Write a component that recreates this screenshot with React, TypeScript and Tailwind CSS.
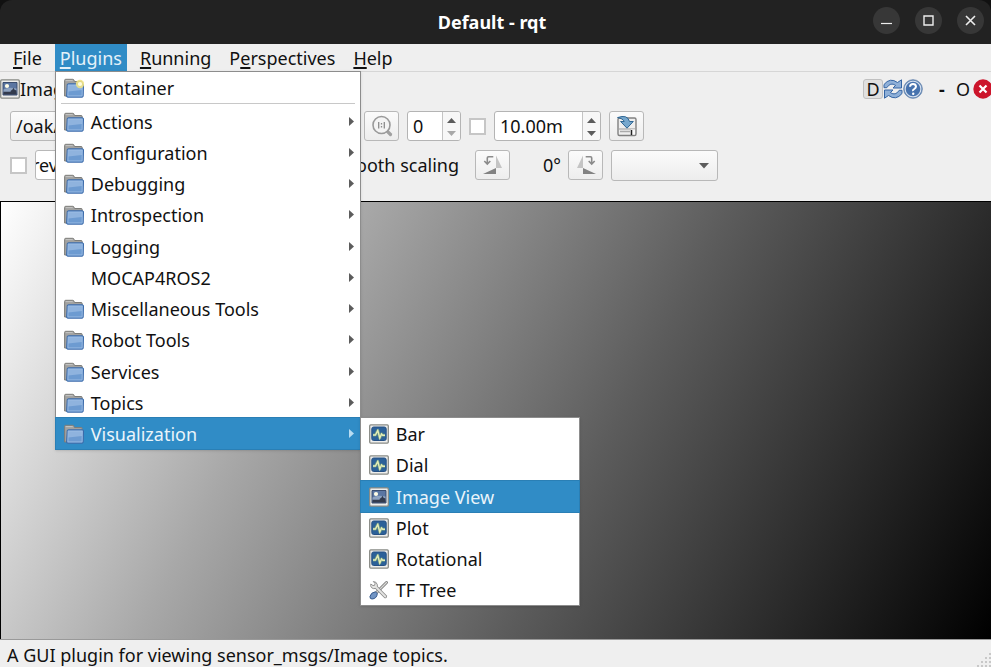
import React from "react";

const FONT = "font-['Noto_Sans','Open_Sans',sans-serif]";

function FolderIcon({ star = false }: { star?: boolean }) {
  return (
    <svg width="20" height="20" viewBox="0 0 20 20" className="shrink-0" aria-hidden="true">
      <path d="M.6 18V2.400Q.6 1.300 1.700 1.300h7.100q.9 0 1.200.9l.5 1.300h6.700q1 0 1 1.100v13.400z" fill="#a2a2a0" stroke="#7d7d7a" />
      <path d="M1.700 2.600h7" stroke="#c6c6c4" />
      <path d="M3.200 6.900q0-1.100 1.100-1.100h14.100q1.100 0 1.100 1.100l-.3 11.200q0 1.100-1.100 1.100H3.600q-1.100 0-1-1.100z" fill="#6d9bd1" stroke="#3a69a8" />
      <path d="M4.300 7h13.900l-.2 5-13.900 1.500z" fill="#8fb3de" />
      <path d="M4.200 7h14.100l-.2 10.900H3.900z" fill="none" stroke="#a3c2e6" strokeWidth=".7" />
      {star && (
        <g>
          <circle cx="16" cy="6" r="4.200" fill="#eee285" opacity=".9" />
          <circle cx="16" cy="6" r="2.100" fill="#fffde0" />
        </g>
      )}
    </svg>
  );
}

function ImageIcon() {
  return (
    <svg width="20" height="20" viewBox="0 0 20 20" className="shrink-0" aria-hidden="true">
      <rect x=".7" y=".9" width="18.600" height="18.200" rx="1" fill="#eeeeec" stroke="#888a85" strokeWidth="1.300" />
      <path d="M3 3.500h14v12.500H3z" fill="#5b76a2" stroke="#3a4d6e" />
      <path d="M3.500 10.500q5-3 13-1v4h-13z" fill="#8ea3c1" />
      <circle cx="7" cy="7" r="2.100" fill="#fffde6" />
      <path d="M3.500 12.800h7l.5-1.500h1l1.500-2.500 1 2 2 .6v4.100h-13z" fill="#333b4d" />
    </svg>
  );
}

function ChartIcon() {
  return (
    <svg width="20" height="20" viewBox="0 0 20 20" className="shrink-0" aria-hidden="true">
      <rect x=".7" y=".9" width="18.600" height="18.200" rx="1" fill="#eeeeec" stroke="#888a85" strokeWidth="1.300" />
      <rect x="2.800" y="3" width="14.400" height="13.500" rx="1.800" fill="#2c6199" stroke="#255084" />
      <path d="M4 11h2.400L8.800 6.500l2 7.500 1.700-4 1.200 1.200H16" fill="none" stroke="#7fa77b" strokeWidth="3" strokeLinejoin="round" opacity=".7" />
      <path d="M4 11h2.400L8.800 6.500l2 7.500 1.700-4 1.200 1.200H16" fill="none" stroke="#e6efb8" strokeWidth="1.400" />
    </svg>
  );
}

function ToolsIcon() {
  return (
    <svg width="20" height="20" viewBox="0 0 20 20" className="shrink-0" aria-hidden="true">
      <path d="M17.500 2.500 7 13" stroke="#777" strokeWidth="3" strokeLinecap="round" />
      <path d="M17.500 2.500 7 13" stroke="#d8d8d5" strokeWidth="1.400" strokeLinecap="round" />
      <path d="m6.500 6.500 9.800 10" stroke="#888" strokeWidth="3.400" strokeLinecap="round" />
      <path d="M4.300 1.500 6 3.400 5.700 5.200 4 5.600 1.800 4Q1 7.500 4.300 8.600Q8.500 9 8.400 4.800Q7.500 1.500 4.300 1.500Z" fill="#e4e4e2" stroke="#888" strokeWidth=".9" />
      <path d="m6.500 6.500 9.800 10" stroke="#e4e4e2" strokeWidth="1.800" strokeLinecap="round" />
      <path d="M6.500 11.800 8.300 13.600Q7.800 18.700 3 19Q.6 19 1 16.300Q2 12.300 6.500 11.800Z" fill="#7295c4" stroke="#35598c" />
    </svg>
  );
}

function ZoomIcon() {
  return (
    <svg width="22" height="22" viewBox="0 0 22 22" aria-hidden="true">
      <path d="m16.500 16.500 3 3" stroke="#a0a0a0" strokeWidth="3.200" strokeLinecap="round" />
      <circle cx="10.500" cy="10" r="8.500" fill="#f4f4f4" stroke="#9a9a9a" strokeWidth="1.600" />
      <path d="M7.700 7v6.500M13.300 7v6.500M10.500 8v1.400M10.500 11v1.400" stroke="#8c8c8c" strokeWidth="1.300" />
    </svg>
  );
}

function SaveIcon() {
  return (
    <svg width="22" height="22" viewBox="0 0 22 22" aria-hidden="true">
      <rect x="2" y="3" width="18" height="17.500" rx="1.500" fill="#eee" stroke="#808080" strokeWidth="1.400" />
      <path d="M3 14h16" stroke="#999" />
      <path d="M4 16.500h10" stroke="#aaa" strokeWidth="1.500" />
      <path d="M15 14.500h4v5h-4z" fill="#fafafa" />
      <path d="M15.500 15v5" stroke="#222" strokeWidth="1.500" />
      <path d="M1.500 2.600Q11.500-1 13.500 6.500h3.800L11 13.200 4.600 6.500h3.600Q7 3.500 1.500 2.600Z" fill="#76a7cd" stroke="#2e6694" />
    </svg>
  );
}

function RotateIcon({ right = false }: { right?: boolean }) {
  return (
    <svg width="22" height="22" viewBox="0 0 22 22" className={right ? "-scale-x-100" : ""} aria-hidden="true">
      <path d="M14 1.500V14h6z" fill="#c4c4c4" />
      <path d="M1 20h13v-6z" fill="#828282" />
      <path d="M11.300 2.800H6.500Q5.300 2.800 5.300 4v5.500M2.300 7l3 3 3-3" fill="none" stroke="#8b8b8b" strokeWidth="1.600" />
    </svg>
  );
}

function RefreshIcon() {
  return (
    <svg width="20" height="20" viewBox="0 0 20 20" aria-hidden="true">
      <path d="M1 8.700V5.500Q7-2 14.500 3.500L18.500.8V9H10l2.600-2.600Q7.500 2.800 3.800 8.700Z" fill="#8fb0d8" stroke="#3465a4" />
      <path d="M19 11.300v3.200q-6 7.500-13.500 2L1.500 19.200V11H10l-2.600 2.600q5.100 3.600 8.800-2.300z" fill="#8fb0d8" stroke="#3465a4" />
    </svg>
  );
}

function HelpIcon() {
  return (
    <svg width="20" height="20" viewBox="0 0 20 20" aria-hidden="true">
      <circle cx="10" cy="10" r="9.300" fill="#3465a4" stroke="#7792b5" />
      <circle cx="10" cy="10" r="7.900" fill="#4773ae" stroke="#d4dfed" strokeWidth="1.300" />
      <path d="M7 7.800Q7.200 5.100 10 5.100T13 7.600Q13 9 11.300 10T10.200 12" fill="none" stroke="#fff" strokeWidth="2" />
      <circle cx="10.200" cy="14.700" r="1.200" fill="#fff" />
    </svg>
  );
}

function CloseIcon() {
  return (
    <svg width="20" height="20" viewBox="0 0 20 20" aria-hidden="true">
      <circle cx="10" cy="10" r="9.700" fill="#cc152b" />
      <path d="m6.500 6.500 7 7m0-7-7 7" stroke="#fff" strokeWidth="2.200" />
    </svg>
  );
}

const MENUS: { pre: string; key: string; post: string; open?: boolean }[] = [
  { pre: "", key: "F", post: "ile" },
  { pre: "", key: "P", post: "lugins", open: true },
  { pre: "", key: "R", post: "unning" },
  { pre: "P", key: "e", post: "rspectives" },
  { pre: "", key: "H", post: "elp" },
];

const GROUPS = [
  "Actions",
  "Configuration",
  "Debugging",
  "Introspection",
  "Logging",
  "MOCAP4ROS2",
  "Miscellaneous Tools",
  "Robot Tools",
  "Services",
  "Topics",
  "Visualization",
];

const VIEWS = ["Bar", "Dial", "Image View", "Plot", "Rotational", "TF Tree"];

function viewIcon(name: string) {
  if (name === "Image View") return <ImageIcon />;
  if (name === "TF Tree") return <ToolsIcon />;
  return <ChartIcon />;
}

function PluginsMenu() {
  return (
    <div role="menu" aria-label="Plugins" className="absolute left-0 top-full z-10 w-[306px] border border-[#8d8d8d] bg-white text-[#111] shadow-sm">
      <button role="menuitem" className="flex h-[31px] w-full items-center gap-[7px] pl-2 text-left">
        <FolderIcon star />
        Container
      </button>
      <div className="mx-[5px] mb-[2px] h-px bg-[#c8c8c8]" />
      {GROUPS.map((name, i) => {
        const active = name === "Visualization";
        return (
          <div key={name} className={i % 4 === 3 ? "relative pb-px" : "relative"}>
            <button
              role="menuitem"
              aria-haspopup="true"
              className={`flex h-[31px] w-full items-center gap-[7px] pl-2 pr-[6px] text-left ${active ? "bg-[#308cc6] text-[#eaf4fa] outline outline-[#2a7fb5]" : ""}`}
            >
              {name === "MOCAP4ROS2" ? <span className="w-5" /> : <FolderIcon />}
              <span className="grow">{name}</span>
              <svg width="5" height="9" viewBox="0 0 5 9" aria-hidden="true">
                <path d="M0 0 5 4.500 0 9z" fill={active ? "#b8dcf2" : "#5c5c5c"} />
              </svg>
            </button>
            {active && (
              <div role="menu" aria-label="Visualization" className="absolute left-full top-[-1px] w-[220px] border border-[#8d8d8d] bg-white text-[#111] shadow-sm">
                {VIEWS.map((view, n) => (
                  <div key={view} className={n === 1 ? "pb-px" : ""}>
                    <button
                      role="menuitem"
                      className={`flex h-[31px] w-full items-center gap-[7px] pl-2 text-left ${view === "Image View" ? "bg-[#308cc6] text-[#eaf4fa] outline outline-[#2a7fb5]" : ""}`}
                    >
                      {viewIcon(view)}
                      {view}
                    </button>
                  </div>
                ))}
              </div>
            )}
          </div>
        );
      })}
    </div>
  );
}

function Spin({ value, label, width, dim = false }: { value: string; label: string; width: string; dim?: boolean }) {
  return (
    <div className={`flex h-[30px] overflow-hidden rounded-[3px] border border-[#b4b4b4] bg-white ${width}`}>
      <input aria-label={label} defaultValue={value} className="w-0 grow px-[5px] outline-none" />
      <div className="flex w-[18px] shrink-0 flex-col border-l border-[#c4c4c4] bg-[#f7f7f7]">
        <button aria-label={`Increase ${label}`} className="flex h-[14px] items-center justify-center pt-[2px]">
          <svg width="9" height="5" viewBox="0 0 9 5"><path d="m0 5 4.500-5L9 5z" fill="#5c5c5c" /></svg>
        </button>
        <button aria-label={`Decrease ${label}`} className="flex h-[14px] items-center justify-center">
          <svg width="9" height="5" viewBox="0 0 9 5"><path d="m0 0 4.500 5L9 0z" fill={dim ? "#a8a8a8" : "#5c5c5c"} /></svg>
        </button>
      </div>
    </div>
  );
}

const TOOL = "flex h-[30px] w-[35px] shrink-0 items-center justify-center rounded-[3px] border border-[#b8b8b8] bg-linear-to-b from-[#fbfbfb] to-[#ededed]";
const CHECK = "size-[17px] shrink-0 appearance-none border-2 border-[#c6c6c6] bg-white";
const WINDOW_BUTTON = "flex size-[27px] items-center justify-center rounded-full bg-[#373737]";

export default function App() {
  return (
    <div className={`flex h-screen flex-col overflow-hidden bg-[#efefef] text-lg leading-6 text-[#111] ${FONT}`}>
      <div className="bg-[#111]">
        <header className="grid h-11 grid-cols-[1fr_auto_1fr] items-center rounded-t-xl bg-[#222] pr-[7px] text-white">
          <span />
          <h1 className="font-bold">Default - rqt</h1>
          <div className="flex justify-end gap-[15px] pb-[3px]">
            <button aria-label="Minimize" className={WINDOW_BUTTON}>
              <svg width="11" height="11" viewBox="0 0 11 11"><path d="M0 8.500h11" stroke="#eee" strokeWidth="1.200" /></svg>
            </button>
            <button aria-label="Maximize" className={WINDOW_BUTTON}>
              <svg width="11" height="11" viewBox="0 0 11 11"><path d="M1 1h9v9H1z" fill="none" stroke="#eee" strokeWidth="1.400" /></svg>
            </button>
            <button aria-label="Close" className={WINDOW_BUTTON}>
              <svg width="11" height="11" viewBox="0 0 11 11"><path d="m1 1 9 9m0-9-9 9" stroke="#eee" strokeWidth="1.600" /></svg>
            </button>
          </div>
        </header>
      </div>

      <nav className="flex h-7 shrink-0 gap-2 border-b border-[#d6d6d6] pl-2">
        {MENUS.map((m) => (
          <div key={m.post} className="relative">
            <button className={`h-7 px-[5px] ${m.open ? "bg-[#308cc6] text-[#e4f1f9]" : ""}`}>
              {m.pre}
              <span className="underline decoration-2 underline-offset-2">{m.key}</span>
              {m.post}
            </button>
            {m.open && <PluginsMenu />}
          </div>
        ))}
      </nav>

      <div className="flex h-[34px] shrink-0 items-center justify-between overflow-hidden">
        <div className="flex items-center">
          <ImageIcon />
          <span>Imag</span>
        </div>
        <div className="flex items-center">
          <button className="h-5 w-5 rounded-[3px] border border-[#c0c0c0] bg-[#e0e0e0] leading-[18px]">D</button>
          <button aria-label="Reload"><RefreshIcon /></button>
          <button aria-label="Help"><HelpIcon /></button>
          <button aria-label="Undock" className="ml-3 w-[14px] font-bold">-</button>
          <button aria-label="Float" className="ml-1 w-5">O</button>
          <button aria-label="Close plugin" className="-mr-[2px]"><CloseIcon /></button>
        </div>
      </div>

      <div className="flex h-10 shrink-0 items-center pl-[10px]">
        <select aria-label="Topic" className="h-[30px] w-[344px] appearance-none rounded-[3px] border border-[#b8b8b8] bg-linear-to-b from-[#fbfbfb] to-[#ededed] px-[5px]">
          <option>/oak/rgb/image_raw</option>
        </select>
        <button aria-label="Zoom 1:1" className={`ml-[10px] ${TOOL}`}><ZoomIcon /></button>
        <div className="ml-2"><Spin value="0" label="gridlines" width="w-[54px]" dim /></div>
        <input type="checkbox" aria-label="Dynamic range" className={`ml-2 ${CHECK}`} />
        <div className="ml-2"><Spin value="10.00m" label="max range" width="w-[107px]" /></div>
        <button aria-label="Save as image" className={`ml-2 ${TOOL}`}><SaveIcon /></button>
      </div>

      <div className="flex h-[38px] shrink-0 items-center pl-[10px]">
        <input type="checkbox" aria-label="Publish mouse position" className={CHECK} />
        <input aria-label="Mouse topic" defaultValue="rev_mouse_left" className="ml-2 h-[30px] w-[270px] rounded-[3px] border border-[#b8b8b8] bg-white -indent-1" />
        <label className="flex w-[154px] items-center justify-end whitespace-nowrap">
          <input type="checkbox" className={`mr-2 ${CHECK}`} />
          Smooth scaling
        </label>
        <button aria-label="Rotate left" className={`ml-4 ${TOOL}`}><RotateIcon /></button>
        <span className="w-[51px] text-right">0°</span>
        <button aria-label="Rotate right" className={`ml-[7px] ${TOOL}`}><RotateIcon right /></button>
        <div className="relative ml-2">
          <select aria-label="Color scheme" className="block h-[31px] w-[107px] appearance-none rounded-[3px] border border-[#b8b8b8] bg-linear-to-b from-[#fbfbfb] to-[#ededed]">
            <option></option>
          </select>
          <svg width="10" height="6" viewBox="0 0 10 6" className="pointer-events-none absolute right-[9px] top-[13px]"><path d="m0 0 5 5.500L10 0z" fill="#5c5c5c" /></svg>
        </div>
      </div>

      <main className="mt-[17px] grow border-l border-t border-black bg-[linear-gradient(118deg,#fff,#a8a8a8_30%,#5c5c5c_60%,#000)]" aria-label="Image" />

      <footer className="flex h-7 shrink-0 items-center justify-between border-t border-[#999] pl-[7px]">
        <span className="pt-[2px]">A GUI plugin for viewing sensor_msgs/Image topics.</span>
        <svg width="14" height="14" viewBox="0 0 14 14" className="self-end" aria-hidden="true">
          <path d="M12 0h2v2h-2zM8 4h2v2H8zM12 4h2v2h-2zM4 8h2v2H4zM8 8h2v2H8zM12 8h2v2h-2zM0 12h2v2H0zM4 12h2v2H4zM8 12h2v2H8zM12 12h2v2h-2z" fill="#c8c8c8" />
        </svg>
      </footer>
    </div>
  );
}
